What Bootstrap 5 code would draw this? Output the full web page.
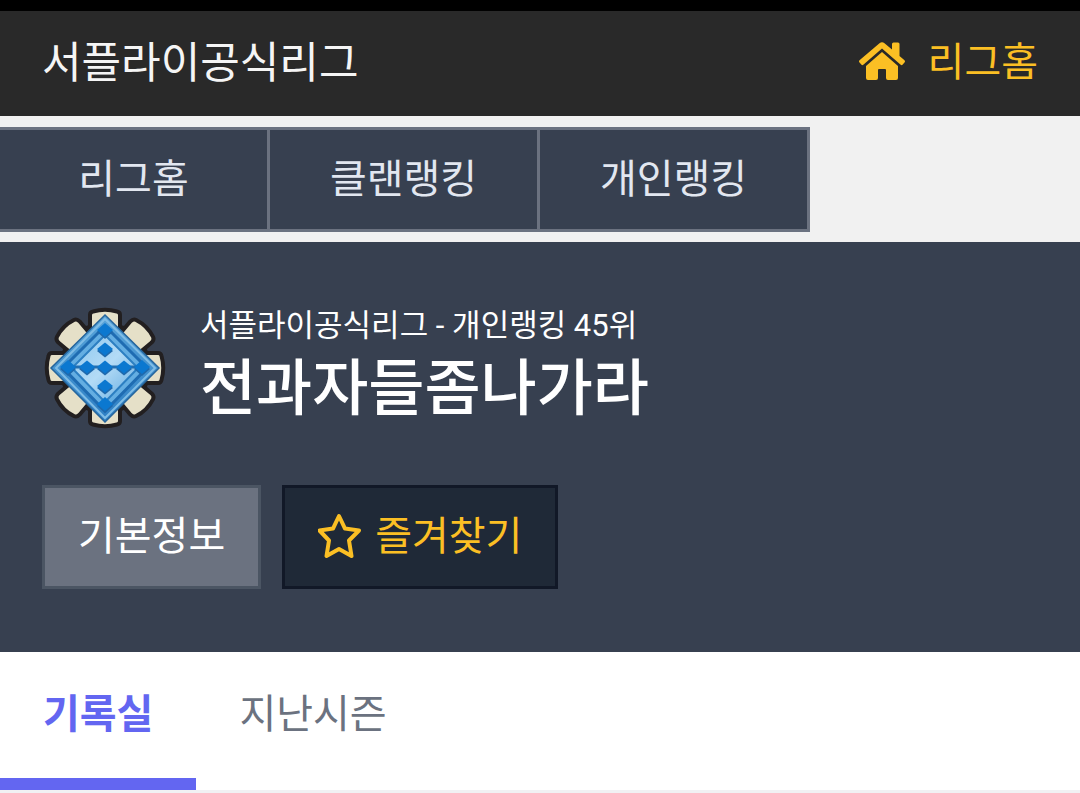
<!DOCTYPE html>
<html lang="ko">
<head>
<meta charset="utf-8">
<meta name="viewport" content="width=device-width, initial-scale=1">
<title>서플라이공식리그</title>
<link href="https://cdn.jsdelivr.net/npm/bootstrap@5.3.0/dist/css/bootstrap.min.css" rel="stylesheet">
<style>
  body { font-family: Roboto, "Noto Sans CJK KR", sans-serif; font-size: 40px; line-height: 60px; background: #fff; }
  a { text-decoration: none; }
  .status-strip { height: 11px; background: #000; }
  .site-head { background: #292929; min-height: 105px; padding: 0 42px 1px; }
  .site-name, .site-name:hover { color: #f5f5f5; font-size: 43px; }
  .home-link, .home-link:hover { color: #fbbf24; gap: 22px; }
  .menu-band { background: #f1f1f1; padding: 11px 0 10px; }
  .menu-item, .menu-item:hover { display: block; background: #374050; color: #e2e7f0; border: 3px solid #6b7280; border-left: 0; padding: 20px 0 19px; text-align: center; }
  .hero { background: #374050; color: #fff; padding: 60px 42px 63px; }
  .hero-info { gap: 32px; }
  .hero-sub { font-size: 31px; line-height: 42px; }
  .hero-name { font-size: 61px; line-height: 84px; font-weight: 500; margin: 0; }
  .hero-actions { gap: 21px; margin-top: 51px; }
  .hero-btn { border: 3px solid #4b5563; border-radius: 0; padding: 19px 33px; font-size: 40px; line-height: 60px; color: #fff; background: #6b7280; gap: 10px; }
  .hero-btn:hover { color: #fff; background: #6b7280; }
  .hero-btn-fav, .hero-btn-fav:hover { color: #fbbf24; background: #1f2937; border-color: #111827; }
  .tab-row { border-bottom: 3px solid #f1f1f3; }
  .tab-item, .tab-item:hover { color: #6b7280; padding: 33px 43px; border-bottom: 12px solid transparent; }
  .tab-item.active { color: #6366f1; border-color: #6366f1; font-weight: 700; }
</style>
</head>
<body>
<div class="status-strip"></div>
<header class="site-head d-flex align-items-center justify-content-between">
  <a class="site-name" href="#">서플라이공식리그</a>
  <a class="home-link d-flex align-items-center" href="#">
    <svg width="48" height="44" viewBox="0 0 48 44" fill="currentColor" aria-hidden="true">
      <path d="M24 11 40 25V37q0 2-2 2h-8q-2 0-2-2v-8q0-1-1-1h-6q-1 0-1 1v8q0 2-2 2h-8q-2 0-2-2V25z"/>
      <path d="M21.500 2.200q2.500-2 5 0L34 8.400V3q0-1.500 1.500-1.500h4.500q1.500 0 1.500 1.500v12l5 4.300q1 1 .2 2l-2 2.300q-1 1-2 .1L24 7.500 5.300 23.700q-1 .9-2-.1l-2-2.300q-.8-1 .2-2z"/>
    </svg>
    <span>리그홈</span>
  </a>
</header>
<nav class="menu-band">
  <div class="row g-0">
    <div class="col-3"><a class="menu-item" href="#">리그홈</a></div>
    <div class="col-3"><a class="menu-item" href="#">클랜랭킹</a></div>
    <div class="col-3"><a class="menu-item" href="#">개인랭킹</a></div>
  </div>
</nav>
<main>
  <section class="hero">
    <div class="hero-info d-flex align-items-center">
      <svg class="flex-shrink-0" width="126" height="132" viewBox="42 302 126 132" role="img" aria-label="엠블럼">
        <defs>
          <linearGradient id="steel" x1="0" y1="0" x2="0" y2="1"><stop offset="0" stop-color="#5aa5da"/><stop offset="1" stop-color="#2d7fc4"/></linearGradient>
          <linearGradient id="ice" x1="0" y1="0" x2="1" y2="1"><stop offset="0" stop-color="#8cc6ee"/><stop offset=".5" stop-color="#b3dbf6"/><stop offset="1" stop-color="#5ea8df"/></linearGradient>
          <path id="petal" d="M90 340V315Q90 312 93 311.500Q105 308 117 311.500Q120 312 120 315V340z"/>
          <path id="corner" d="M92 340 90 317Q90 313 93 312Q105 308 117 312Q120 313 120 317L118 340z"/>
          <path id="stud" d="M0-6.500 8 0 0 6.500-8 0z"/>
          <path id="stud-big" d="M0-7 8 0 0 7-8 0z"/>
          <g id="cross">
            <use href="#stud-big" x="105" y="330"/><use href="#stud" x="105" y="349"/><use href="#stud" x="105" y="367"/><use href="#stud" x="105" y="386"/><use href="#stud-big" x="105" y="404"/>
            <use href="#stud-big" x="68" y="367"/><use href="#stud" x="87" y="367"/><use href="#stud" x="124" y="367"/><use href="#stud-big" x="142" y="367"/>
          </g>
        </defs>
        <circle cx="105" cy="368" r="46" fill="#221f20"/>
        <g fill="#e5e0c8" stroke="#221f20" stroke-width="4" stroke-linejoin="round">
          <use href="#petal"/><use href="#petal" transform="rotate(90 105 368)"/>
          <use href="#petal" transform="rotate(180 105 368)"/><use href="#petal" transform="rotate(270 105 368)"/>
          <use href="#corner" transform="rotate(45 105 368)"/><use href="#corner" transform="rotate(135 105 368)"/>
          <use href="#corner" transform="rotate(225 105 368)"/><use href="#corner" transform="rotate(315 105 368)"/>
        </g>
        <path d="M105 315 159 368 105 422 51 368z" fill="url(#steel)" stroke="#25659c" stroke-width="1.500"/>
        <path d="M105 319 155 368 105 418 56 368z" fill="none" stroke="#80bde6" stroke-width="2"/>
        <path d="M105 326 147 368 105 411 63 368z" fill="#64aee2" stroke="#1f6cb2" stroke-width="3"/>
        <path d="M105 335 138 368 105 402 72 368z" fill="url(#ice)" stroke="#2c7fc2" stroke-width="2"/>
        <path d="M66 367H145" stroke="#236eb0" stroke-width="3"/>
        <use href="#cross" y="2" fill="#1f69ac"/>
        <use href="#cross" fill="#0b78d0"/>
      </svg>
      <div>
        <div class="hero-sub">서플라이공식리그 - 개인랭킹 45위</div>
        <h1 class="hero-name">전과자들좀나가라</h1>
      </div>
    </div>
    <div class="hero-actions d-flex flex-wrap">
      <button type="button" class="btn hero-btn">기본정보</button>
      <button type="button" class="btn hero-btn hero-btn-fav d-flex align-items-center">
        <svg width="47" height="48" viewBox="0 0 47 48" fill="none" stroke="currentColor" stroke-width="4" stroke-linejoin="round" aria-hidden="true">
          <path d="M21 3 27 15.600 41 17.500 31 27.500 33.500 43 21 36 8.500 43 11 27.500 1.500 17.500 15 15.600z"/>
        </svg>
        <span>즐겨찾기</span>
      </button>
    </div>
  </section>
  <nav class="tab-row d-flex">
    <a class="tab-item active" href="#" aria-current="page">기록실</a>
    <a class="tab-item" href="#">지난시즌</a>
  </nav>
</main>
<script src="https://cdn.jsdelivr.net/npm/bootstrap@5.3.0/dist/js/bootstrap.bundle.min.js"></script>
</body>
</html>
